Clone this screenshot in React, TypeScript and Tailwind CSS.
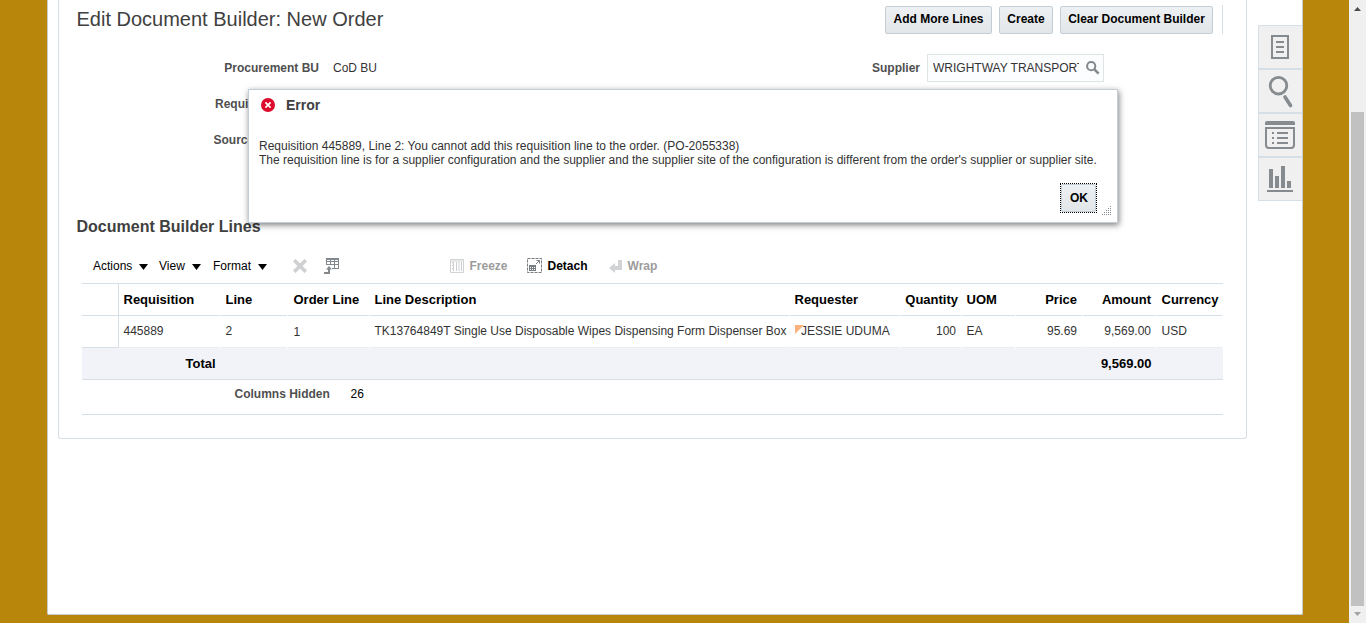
import React from "react";

const COLS = "grid grid-cols-[37px_101px_68px_82px_420px_110px_62px_54px_67px_74px_66px]";

function Btn({ className, children }: { className: string; children: React.ReactNode }) {
  return (
    <button
      className={`h-7 shrink-0 rounded-[2px] border border-[#c4ced7] bg-linear-to-b from-[#eef1f3] to-[#e2e6e9] text-center text-[12px] leading-[14px] font-bold whitespace-nowrap text-black ${className}`}
    >
      {children}
    </button>
  );
}

function Menu({ label, className }: { label: string; className: string }) {
  return (
    <div className={`flex h-4 shrink-0 items-center justify-between text-[12px] text-black ${className}`}>
      <span>{label}</span>
      <svg width="9" height="6" viewBox="0 0 9 6" className="mt-[2px]">
        <path d="M0 0h9L4.5 6z" fill="#000" />
      </svg>
    </div>
  );
}

function Header({ children, right, className = "pl-[4.5px]" }: { children?: React.ReactNode; right?: boolean; className?: string }) {
  return (
    <div
      className={`mr-px flex h-8 items-center border-b border-[#d6dfe6] text-[13px] font-bold whitespace-nowrap text-black ${right ? "justify-end" : ""} ${className}`}
    >
      {children}
    </div>
  );
}

function Cell({ children, right, className = "pl-[4.5px]" }: { children?: React.ReactNode; right?: boolean; className?: string }) {
  return (
    <div
      className={`mr-px flex h-8 items-center border-b border-[#ebedf2] pb-px text-[12px] whitespace-nowrap text-[#333] ${right ? "justify-end pr-[5px]" : ""} ${className}`}
    >
      {children}
    </div>
  );
}

function SideButton({ children, last }: { children: React.ReactNode; last?: boolean }) {
  return (
    <div className={`flex h-11 w-11 border-t border-l border-[#d6dfe6] bg-[#f0f0f0] ${last ? "border-b" : "shadow-[inset_0_-1px_0_#d6dfe6]"}`}>
      <svg width="43" height="43" viewBox="0 0 43 43" fill="none" className="shrink-0">
        {children}
      </svg>
    </div>
  );
}

export default function App() {
  return (
    <div className="relative flex h-[623px] w-[1366px] overflow-hidden bg-[#b8860b] font-['Liberation_Sans',Arial,sans-serif] text-[12px] leading-[14px] text-[#333]">
      <div className="ml-[47px] flex h-[615px] w-[1256px] shrink-0 rounded-b-[2px] border-x border-b border-[#c9cccd] bg-white">
        <main className="ml-[10px] h-[439px] w-[1189px] shrink-0 rounded-b-[3px] border-x border-b border-[#d6dfe6]">
          <div className="flex h-[38px] pt-[6px] pr-[23px] pl-[17.5px]">
            <h1 className="mt-[3px] flex-1 text-[20px] leading-5 whitespace-nowrap text-[#404040]">
              Edit Document Builder: New Order
            </h1>
            <div className="flex">
              <Btn className="mr-[7px] w-[107px] pb-[2px]">Add More Lines</Btn>
              <Btn className="mr-[7px] w-[54px] pb-[2px]">Create</Btn>
              <Btn className="mr-[9px] w-[153px] pb-[2px]">Clear Document Builder</Btn>
              <div className="-mt-px h-[29px] w-px bg-[#d6dfe6]" />
            </div>
          </div>

          <div className="flex h-[172px] justify-between pr-[142px]">
            <div className="grid auto-rows-[36px] grid-cols-[260px_auto] content-start gap-x-[14px] pt-3">
              <span className="pt-[11px] text-right font-bold text-[#4f4f4f]">Procurement BU</span>
              <span className="pt-[11px]">CoD BU</span>
              <span className="pt-[11px] pl-[156px] font-bold whitespace-nowrap text-[#4f4f4f]">Requi</span>
              <span />
              <span className="pt-[11px] pl-[154.5px] font-bold whitespace-nowrap text-[#4f4f4f]">Source</span>
              <span />
            </div>
            <div className="mt-4 flex h-7 items-center">
              <span className="mr-[7px] font-bold text-[#4f4f4f]">Supplier</span>
              <div className="flex h-7 w-[177px] items-center border border-[#dfe4e7] bg-[#fcfdfe] pl-[5px]">
                <div className="w-[146px] overflow-hidden whitespace-nowrap">WRIGHTWAY TRANSPORT</div>
                <svg width="14" height="14" viewBox="0 0 14 14" fill="none" className="ml-[7px] shrink-0">
                  <circle cx="5.2" cy="5.2" r="4.1" stroke="#82888c" strokeWidth="2" />
                  <path d="M8.4 8.4l4.2 4.2" stroke="#82888c" strokeWidth="2.6" />
                </svg>
              </div>
            </div>
          </div>

          <h2 className="mt-[7px] ml-[17.5px] text-[16px] leading-[19px] font-bold text-[#404040]">Document Builder Lines</h2>

          <section className="ml-[23px] w-[1141px]">
            <div className="flex h-[47px] items-center pt-3 pl-[11px]">
              <Menu label="Actions" className="w-[55px]" />
              <Menu label="View" className="ml-[11px] w-[42px]" />
              <Menu label="Format" className="ml-3 w-[54px]" />
              <svg width="14" height="14" viewBox="0 0 14 14" className="ml-[26px]">
                <path d="M1.2 1.2l11.6 11.6M12.8 1.2L1.2 12.8" stroke="#ced0d1" strokeWidth="3.7" />
              </svg>
              <svg width="16" height="16" viewBox="0 0 16 16" fill="none" className="ml-[17px] shrink-0">
                <path d="M2 1h13" stroke="#82888c" strokeWidth="2" />
                <path d="M2.5 1v5.5M6.5 1v6M10.5 1v10M14.5 1v10M2 3.5h13M2 6.5h13M8 10.5h7" stroke="#82888c" />
                <path d="M0 15h5V11" stroke="#82888c" strokeWidth="2" />
                <path d="M2 11.5l3-3.5 3 3.5z" fill="#82888c" />
              </svg>
              <svg width="14" height="14" viewBox="0 0 14 14" fill="none" className="ml-[110px] shrink-0">
                <path d="M.5.5h13v13H.5z" stroke="#d1d3d4" />
                <path d="M1 2h12" stroke="#d1d3d4" />
                <path d="M3.5 3v9M6.5 3v9M9 3v9M11.5 3v9" stroke="#cccecf" />
                <path d="M2 3.5h1M2 6.5h1M2 9.5h1" stroke="#cccecf" />
              </svg>
              <span className="ml-[5.5px] font-bold text-[#9c9c9c]">Freeze</span>
              <svg width="15" height="15" viewBox="0 0 15 15" fill="none" className="ml-[19.5px] shrink-0">
                <path d="M.5.5h14v14H.5z" stroke="#777d81" strokeDasharray="3 1" />
                <path d="M2 7h7v6H2z" fill="#777d81" />
                <path d="M3 9.5h5M3 11.5h5" stroke="#fff" />
                <path d="M4.5 9v4M6.5 9v4" stroke="#777d81" />
                <path d="M9 6l3-3M9.5 2.5H12.5V5.5" stroke="#777d81" />
              </svg>
              <span className="ml-[5.5px] font-bold text-black">Detach</span>
              <svg width="13" height="14" viewBox="0 0 13 14" className="ml-[21px] shrink-0">
                <path d="M9 1h4v10H6v3L0 9l6-5v3h3z" fill="#d1d3d4" />
              </svg>
              <span className="ml-[6px] font-bold text-[#9c9c9c]">Wrap</span>
            </div>

            <div className={`${COLS} h-[33px] border-t border-[#d6dfe6]`}>
              <div className="h-8 border-r border-b border-[#d6dfe6]" />
              <Header>Requisition</Header>
              <Header className="pl-[5.5px]">Line</Header>
              <Header className="pl-[5.5px]">Order Line</Header>
              <Header>Line Description</Header>
              <Header>Requester</Header>
              <Header right className="pr-[3px]">Quantity</Header>
              <Header>UOM</Header>
              <Header right className="pr-[5px]">Price</Header>
              <Header right className="pr-[5px]">Amount</Header>
              <Header>Currency</Header>
            </div>
            <div className={`${COLS} h-8`}>
              <div className="h-8 border-r border-b border-[#d6dfe6]" />
              <Cell>445889</Cell>
              <Cell className="pl-[5.5px]">2</Cell>
              <Cell className="pt-[2px] pl-[5.5px]">1</Cell>
              <Cell>TK13764849T Single Use Disposable Wipes Dispensing Form Dispenser Box</Cell>
              <Cell className="pl-[5px]">
                <svg width="9" height="9" viewBox="0 0 9 9" className="-mr-[3px] mb-[4px] shrink-0">
                  <path d="M0 0h9L0 9z" fill="#fbb27c" />
                </svg>
                <span>JESSIE UDUMA</span>
              </Cell>
              <Cell right>100</Cell>
              <Cell>EA</Cell>
              <Cell right>95.69</Cell>
              <Cell right>9,569.00</Cell>
              <Cell>USD</Cell>
            </div>
            <div className="flex h-8 items-center justify-between border-b border-[#d6dfe6] bg-[#f2f3f8] pr-[71.5px] pl-[103.5px] text-[13px] font-bold text-black">
              <span>Total</span>
              <span>9,569.00</span>
            </div>
            <div className="flex h-[35px] border-b border-[#d6dfe6] pt-[7px] pl-[152.5px]">
              <span className="w-[116px] font-bold text-[#4f4f4f]">Columns Hidden</span>
              <span className="text-black">26</span>
            </div>
          </section>
        </main>

        <aside className="mt-[25px] ml-[11px]">
          <SideButton>
            <path d="M13 10h16v22H13z" stroke="#858b8f" strokeWidth="2" />
            <path d="M17 16h8M17 21h8M17 26h8" stroke="#858b8f" strokeWidth="2" />
          </SideButton>
          <SideButton>
            <circle cx="19.5" cy="15.7" r="8.3" stroke="#858b8f" strokeWidth="2.8" />
            <path d="M26 27l5.5 8.5" stroke="#858b8f" strokeWidth="3.6" strokeLinecap="round" />
          </SideButton>
          <SideButton>
            <path d="M6 11V9q0-2 2-2h26q2 0 2 2v2z" fill="#858b8f" />
            <path d="M7 14h28v17q0 3-3 3H10q-3 0-3-3z" stroke="#858b8f" strokeWidth="2" />
            <path d="M13 19h2m3 0h11M13 24h2m3 0h11M13 29h2m3 0h11" stroke="#858b8f" strokeWidth="2" />
          </SideButton>
          <SideButton last>
            <path d="M12 11v19M18 18v12M24 8v22M30 23v7" stroke="#858b8f" strokeWidth="4" />
            <path d="M8 33h26" stroke="#858b8f" strokeWidth="2" />
          </SideButton>
        </aside>
      </div>

      <div className="ml-auto flex h-full w-[17px] shrink-0 flex-col items-center bg-[#f0f0f0]">
        <svg width="7" height="4" viewBox="0 0 7 4" className="mt-[7px] shrink-0">
          <path d="M3.5 0L7 4H0z" fill="#4d4d4d" />
        </svg>
        <div className="mt-[101px] h-[494px] w-[13px] shrink-0 bg-[#c1c1c1]" />
        <svg width="7" height="4" viewBox="0 0 7 4" className="mt-[6px] shrink-0">
          <path d="M0 0h7L3.5 4z" fill="#a3a3a3" />
        </svg>
      </div>

      <div
        role="dialog"
        className="absolute top-[89px] left-[248px] flex h-[134px] w-[870px] flex-col border border-[#c4ced7] bg-white shadow-[1px_2px_6px_rgba(0,0,0,0.5)]"
      >
        <div className="flex h-[30px] items-center pl-3">
          <svg width="14" height="14" viewBox="0 0 14 14">
            <circle cx="7" cy="7" r="7" fill="#dc0a2b" />
            <path d="M4.4 4.4l5.2 5.2M9.6 4.4L4.4 9.6" stroke="#fff" strokeWidth="1.7" />
          </svg>
          <span className="ml-[11px] text-[14px] font-bold text-[#404040]">Error</span>
        </div>
        <div className="mt-[19px] ml-[10px] whitespace-nowrap">
          <p>Requisition 445889, Line 2: You cannot add this requisition line to the order. (PO-2055338)</p>
          <p>
            The requisition line is for a supplier configuration and the supplier and the supplier site of the
            configuration is different from the order's supplier or supplier site.
          </p>
        </div>
        <div className="mt-4 flex justify-end pr-[5px]">
          <div className="mr-[5px] h-[30px] w-[37px] border border-dotted border-black">
            <Btn className="w-[35px] pl-px">OK</Btn>
          </div>
          <svg width="10" height="10" viewBox="0 0 10 10" className="mt-[22px]">
            <path
              d="M8 1h1M6 3h1M8 3h1M4 5h1M6 5h1M8 5h1M2 7h1M4 7h1M6 7h1M8 7h1M0 9h1M2 9h1M4 9h1M6 9h1M8 9h1"
              transform="translate(0 .5)"
              stroke="#8c9196"
            />
          </svg>
        </div>
      </div>
    </div>
  );
}
